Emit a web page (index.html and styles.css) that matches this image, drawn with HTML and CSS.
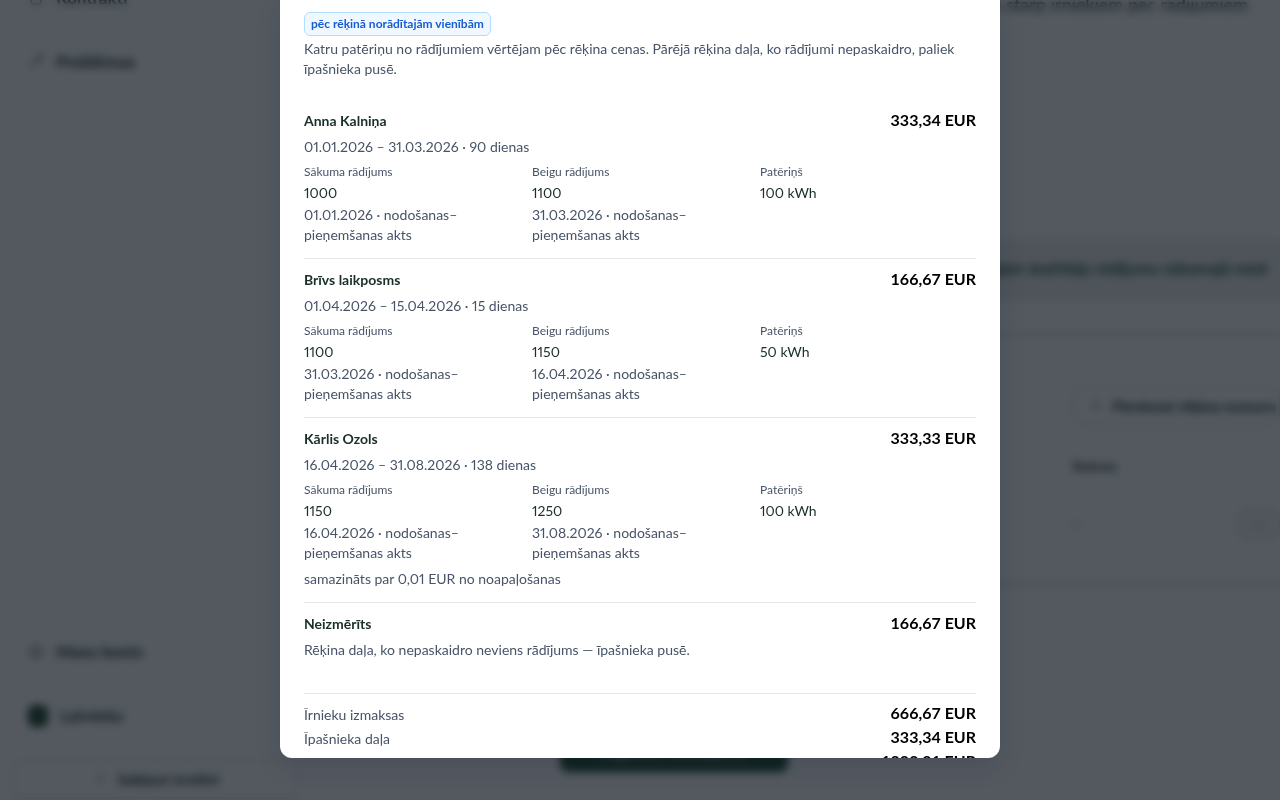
FILE: index.html
```html
<!DOCTYPE html>
<html lang="lv">
<head>
    <meta charset="UTF-8">
    <meta name="viewport" content="width=device-width, initial-scale=1.0">
    <title>Rēķina sadalījums</title>
    <link rel="stylesheet" href="styles.css">
</head>
<body>
    <div class="app" aria-hidden="true" inert>
        <!-- Sidebar -->
        <nav class="sidebar">
            <div class="nav-group">
                <a href="#" class="nav-item">
                    <svg viewBox="0 0 16 16"><rect x="3" y="2" width="10" height="12" rx="2"/></svg>
                    Kontrakti
                </a>
                <a href="#" class="nav-item">
                    <svg viewBox="0 0 16 16"><path d="M2 14l7-7M8 5a3 3 0 0 1 5-3l-2 2 1 1 2-2a3 3 0 0 1-4 4"/></svg>
                    Problēmas
                </a>
            </div>
            <div class="nav-group">
                <a href="#" class="nav-item">
                    <svg viewBox="0 0 16 16"><circle cx="8" cy="8" r="6"/><circle cx="8" cy="8" r="2"/></svg>
                    Mans konts
                </a>
                <a href="#" class="nav-item">
                    <span class="flag"></span>
                    Latviešu
                </a>
                <button class="outline-button">
                    <svg viewBox="0 0 16 16"><path d="M10 3L5 8l5 5"/></svg>
                    Sakļaut izvēlni
                </button>
            </div>
        </nav>

        <!-- Page content -->
        <main class="content">
            <p class="intro">Sadaliet rēķinu starp īrniekiem pēc rādījumiem</p>
            <section class="notice">
                <a href="#">Pievienojiet skaitītāju rādījumu nākamajā reizē</a>
            </section>
            <section class="meters">
                <button class="outline-button">
                    <svg viewBox="0 0 16 16"><path d="M8 3v10M3 8h10"/></svg>
                    Pievienot rēķina numuru
                </button>
                <div class="meters-label">Statuss</div>
                <div class="meters-row">
                    <span>–</span>
                    <button class="more">···</button>
                </div>
            </section>
            <button class="save-button">Saglabāt sadalījumu</button>
        </main>
    </div>

    <div class="overlay">
        <div class="dialog" role="dialog" aria-modal="true" aria-label="Rēķina sadalījums">
            <div class="summary">
                <span class="badge">pēc rēķinā norādītajām vienībām</span>
                <p>Katru patēriņu no rādījumiem vērtējam pēc rēķina cenas. Pārējā rēķina daļa, ko rādījumi nepaskaidro, paliek īpašnieka pusē.</p>
            </div>

            <div class="entries">
                <section class="entry">
                    <div class="entry-head">
                        <h3>Anna Kalniņa</h3>
                        <span class="amount">333,34 EUR</span>
                    </div>
                    <p>01.01.2026 – 31.03.2026 · 90 dienas</p>
                    <dl class="readings">
                        <div>
                            <dt>Sākuma rādījums</dt>
                            <dd class="value">1000</dd>
                            <dd>01.01.2026 · nodošanas–pieņemšanas akts</dd>
                        </div>
                        <div>
                            <dt>Beigu rādījums</dt>
                            <dd class="value">1100</dd>
                            <dd>31.03.2026 · nodošanas–pieņemšanas akts</dd>
                        </div>
                        <div>
                            <dt>Patēriņš</dt>
                            <dd class="value">100 kWh</dd>
                        </div>
                    </dl>
                </section>

                <section class="entry">
                    <div class="entry-head">
                        <h3>Brīvs laikposms</h3>
                        <span class="amount">166,67 EUR</span>
                    </div>
                    <p>01.04.2026 – 15.04.2026 · 15 dienas</p>
                    <dl class="readings">
                        <div>
                            <dt>Sākuma rādījums</dt>
                            <dd class="value">1100</dd>
                            <dd>31.03.2026 · nodošanas–pieņemšanas akts</dd>
                        </div>
                        <div>
                            <dt>Beigu rādījums</dt>
                            <dd class="value">1150</dd>
                            <dd>16.04.2026 · nodošanas–pieņemšanas akts</dd>
                        </div>
                        <div>
                            <dt>Patēriņš</dt>
                            <dd class="value">50 kWh</dd>
                        </div>
                    </dl>
                </section>

                <section class="entry">
                    <div class="entry-head">
                        <h3>Kārlis Ozols</h3>
                        <span class="amount">333,33 EUR</span>
                    </div>
                    <p>16.04.2026 – 31.08.2026 · 138 dienas</p>
                    <dl class="readings">
                        <div>
                            <dt>Sākuma rādījums</dt>
                            <dd class="value">1150</dd>
                            <dd>16.04.2026 · nodošanas–pieņemšanas akts</dd>
                        </div>
                        <div>
                            <dt>Beigu rādījums</dt>
                            <dd class="value">1250</dd>
                            <dd>31.08.2026 · nodošanas–pieņemšanas akts</dd>
                        </div>
                        <div>
                            <dt>Patēriņš</dt>
                            <dd class="value">100 kWh</dd>
                        </div>
                    </dl>
                    <p class="rounding">samazināts par 0,01 EUR no noapaļošanas</p>
                </section>

                <section class="entry">
                    <div class="entry-head">
                        <h3>Neizmērīts</h3>
                        <span class="amount">166,67 EUR</span>
                    </div>
                    <p>Rēķina daļa, ko nepaskaidro neviens rādījums — īpašnieka pusē.</p>
                </section>
            </div>

            <div class="totals">
                <div class="total">
                    <span>Īrnieku izmaksas</span>
                    <span class="amount">666,67 EUR</span>
                </div>
                <div class="total">
                    <span>Īpašnieka daļa</span>
                    <span class="amount">333,34 EUR</span>
                </div>
                <div class="total">
                    <span>Kopā</span>
                    <span class="amount">1000,01 EUR</span>
                </div>
            </div>
        </div>
    </div>
</body>
</html>
```

FILE: styles.css
```css
* {
    box-sizing: border-box;
}

body {
    font-family: Lato, "Liberation Sans", sans-serif;
    font-size: 14px;
    line-height: 20px;
    font-variant-numeric: proportional-nums;
    color: #475467;
    background: white;
    margin: 0;
    height: 100vh;
    overflow: hidden;
}

h3, p, dl, dd {
    margin: 0;
}

svg {
    flex-shrink: 0;
    width: 16px;
    height: 16px;
    fill: none;
    stroke: currentColor;
    stroke-width: 2;
}

/* App behind the dialog */
.app {
    display: flex;
    height: 100vh;
    font-size: 17px;
    font-weight: bold;
    color: #1b3a22;
}

.sidebar {
    flex: 0 0 312px;
    padding: 0 12px;
    display: flex;
    flex-direction: column;
    justify-content: space-between;
}

.nav-group {
    display: flex;
    flex-direction: column;
}

.nav-item {
    display: flex;
    align-items: center;
    gap: 12px;
    height: 64px;
    padding: 0 16px;
    color: inherit;
    text-decoration: none;
}

.nav-item svg,
.outline-button svg {
    opacity: 0.5;
}

.nav-group:first-child {
    margin-top: -34px;
}

.flag {
    width: 20px;
    height: 22px;
    border-radius: 6px;
    background: #1f4a2c;
}

.outline-button {
    display: flex;
    align-items: center;
    justify-content: center;
    gap: 8px;
    height: 40px;
    padding: 0 20px;
    font: inherit;
    font-size: 16px;
    color: inherit;
    background: white;
    border: 2px solid #e8e8e8;
    border-radius: 12px;
    white-space: nowrap;
}

.sidebar .outline-button {
    margin: 11px 0 1px;
}

.content {
    flex: 1;
    min-width: 0;
    display: flex;
    flex-direction: column;
    padding-left: 32px;
}

.intro {
    padding: 0 32px 40px;
    line-height: 8px;
    font-size: 18px;
    font-weight: normal;
    text-align: right;
    border-bottom: 1px solid #f2f2f2;
}

.notice {
    margin-top: 189px;
    padding: 20px 12px 24px;
    font-size: 16px;
    text-align: right;
    background: #eeeeee;
}

.notice a {
    color: #14532d;
    text-decoration: none;
}

.meters {
    display: flex;
    flex-direction: column;
    align-items: flex-end;
    margin-top: 28px;
    padding: 48px 0 38px;
    border-top: 8px solid #f0f0f0;
    border-bottom: 8px solid #f0f0f0;
}

.meters .outline-button,
.meters-label,
.meters-row {
    width: 208px;
}

.meters-label,
.meters-row {
    margin-top: 30px;
    font-size: 14px;
}

.meters-row {
    display: flex;
    justify-content: space-between;
    align-items: center;
}

.meters .outline-button {
    justify-content: flex-start;
    padding: 0 14px;
    font-size: 15px;
}

.more {
    width: 44px;
    height: 36px;
    color: inherit;
    background: #f4f4f4;
    border: 1px solid #e8e8e8;
    border-radius: 12px;
}

.save-button {
    width: 228px;
    height: 44px;
    margin: auto 0 28px 216px;
    font: inherit;
    color: white;
    background: #1c4a2e;
    border: none;
    border-radius: 8px;
}

/* Dialog */
.overlay {
    position: fixed;
    inset: 0;
    display: flex;
    justify-content: center;
    align-items: flex-start;
    background: rgba(12, 18, 28, 0.7);
    backdrop-filter: blur(4px);
}

.dialog {
    width: 720px;
    max-width: 100%;
    height: calc(100vh - 42px);
    padding: 12px 24px 24px;
    overflow: hidden;
    background: white;
    border-radius: 0 0 12px 12px;
    box-shadow: 0 8px 24px rgba(16, 24, 40, 0.15);
}

.summary {
    display: flex;
    flex-direction: column;
    align-items: flex-start;
    gap: 3px;
}

.badge {
    padding: 1px 6px;
    font-size: 12px;
    font-weight: bold;
    color: #175cd3;
    background: #eff8ff;
    border: 1px solid #b2ddff;
    border-radius: 6px;
}

.entries {
    margin: 21px 0 20px;
}

.entry {
    padding: 9px 0 13px;
    border-bottom: 1px solid #e8e8e8;
}

.entry:last-child {
    border-bottom: none;
}

.entry-head,
.total {
    display: flex;
    justify-content: space-between;
    line-height: 24px;
}

.entry-head {
    margin-bottom: 4px;
}

.entry-head h3 {
    font-size: 14px;
    color: #1a2e2a;
}

.amount {
    font-size: 16px;
    line-height: 22px;
    font-weight: bold;
    font-variant-numeric: tabular-nums;
    color: black;
}

.readings {
    display: grid;
    grid-template-columns: repeat(3, 1fr);
    gap: 12px;
    margin-top: 6px;
}

.readings div {
    display: flex;
    flex-direction: column;
    gap: 2px;
}

.readings dt {
    font-size: 12px;
    line-height: 18px;
}

.readings .value {
    color: #1a2e2a;
}

.rounding {
    margin-top: 6px;
}

.totals {
    padding-top: 8px;
    border-top: 1px solid #e8e8e8;
}

.total {
    height: 24px;
    line-height: 26px;
}
```
